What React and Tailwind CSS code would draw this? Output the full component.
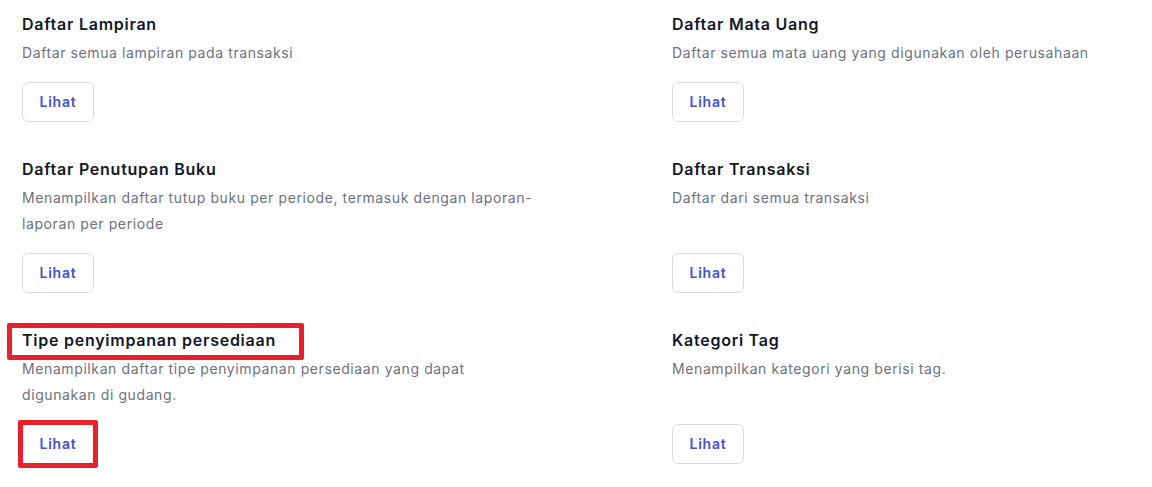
const items = [
  { title: 'Daftar Lampiran', desc: 'Daftar semua lampiran pada transaksi' },
  { title: 'Daftar Mata Uang', desc: 'Daftar semua mata uang yang digunakan oleh perusahaan' },
  { title: 'Daftar Penutupan Buku', desc: 'Menampilkan daftar tutup buku per periode, termasuk dengan laporan-laporan per periode' },
  { title: 'Daftar Transaksi', desc: 'Daftar dari semua transaksi' },
  { title: 'Tipe penyimpanan persediaan', desc: 'Menampilkan daftar tipe penyimpanan persediaan yang dapat digunakan di gudang.', marked: true },
  { title: 'Kategori Tag', desc: 'Menampilkan kategori yang berisi tag.' },
];

export default function App() {
  return (
    <div className="min-h-screen bg-white font-['Inter',sans-serif]">
      <div className="grid grid-cols-[650px_1fr] gap-y-[33px] pl-[22px] pt-[10px]">
        {items.map(({ title, desc, marked }) => (
          <div key={title} className="flex flex-col">
            <div className="relative">
              <h3 className="text-base leading-7 font-semibold tracking-[0.75px] text-[#111827]">{title}</h3>
              {marked && (
                <div className="absolute -left-[15px] -top-[3px] w-[297px] h-[37px] border-[5px] border-[#e8202a] rounded-[2px] pointer-events-none" />
              )}
            </div>
            <p className="mt-[2px] max-w-[511px] text-sm leading-[26px] tracking-[0.6px] text-[#6b7280]">{desc}</p>
            <div className="mt-auto pt-4">
              <div className="relative inline-block">
                <button className="h-10 w-[72px] rounded-md border border-[#d9dce1] bg-white text-sm font-semibold tracking-[0.8px] text-[#4151d8]">
                  Lihat
                </button>
                {marked && (
                  <div className="absolute -left-[4px] -top-[4px] -right-[4px] -bottom-[4px] border-[5px] border-[#e8202a] rounded-[2px] pointer-events-none" />
                )}
              </div>
            </div>
          </div>
        ))}
      </div>
    </div>
  );
}
